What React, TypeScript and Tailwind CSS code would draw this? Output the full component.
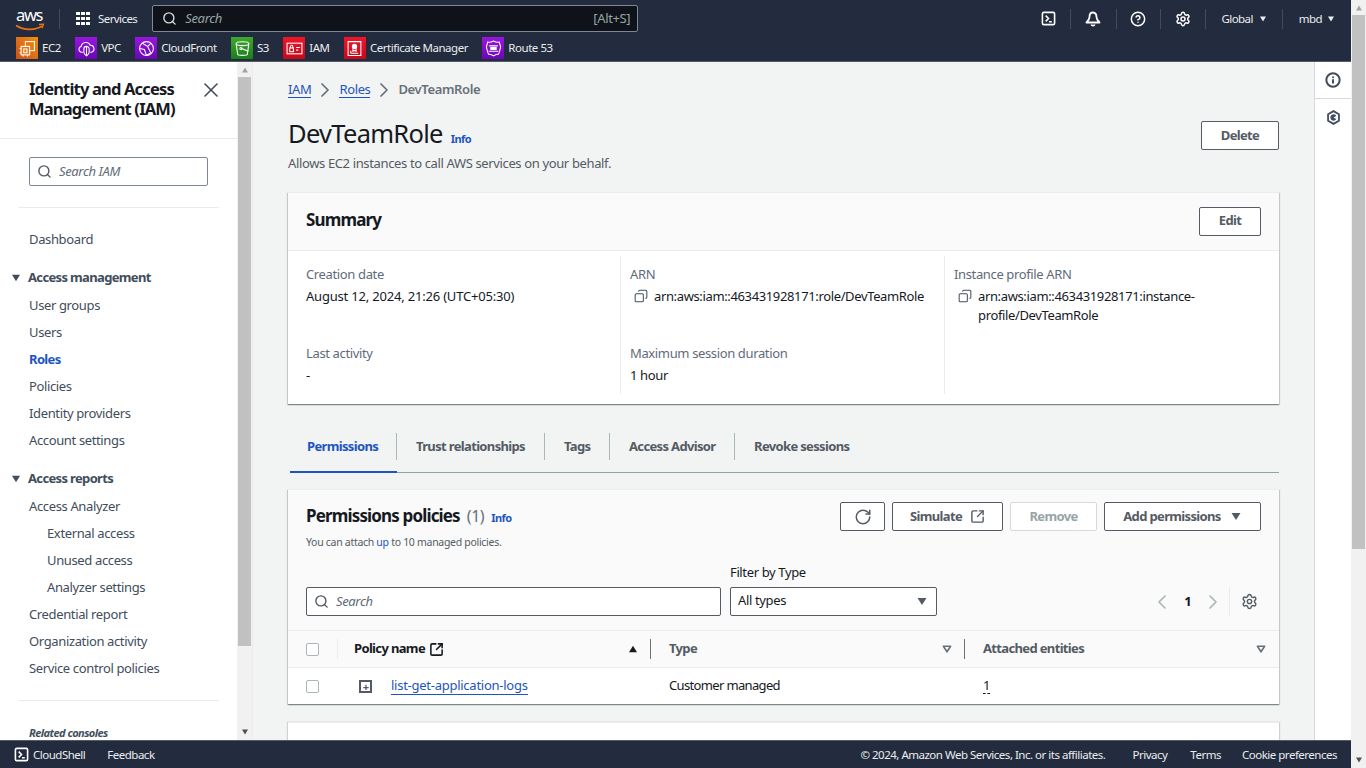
import React from 'react';
import { Search, X, RotateCw, SquareArrowOutUpRight, Settings, ChevronLeft, ChevronRight, Copy, HelpCircle, Info } from 'lucide-react';

const Caret: React.FC<{ className?: string; up?: boolean; outline?: boolean }> = ({ className, up, outline }) => (
  <svg viewBox="0 0 12 10" className={className}>
    {up ? (
      <path d="M6 1l5 8H1z" fill="currentColor" />
    ) : outline ? (
      <path d="M1.5 1.5h9L6 8.5z" fill="none" stroke="currentColor" strokeWidth="2" strokeLinejoin="round" />
    ) : (
      <path d="M1 1h10L6 9z" fill="currentColor" />
    )}
  </svg>
);

const TerminalIcon: React.FC<{ className?: string }> = ({ className }) => (
  <svg viewBox="0 0 16 16" className={className} fill="none" stroke="currentColor" strokeWidth="1.7">
    <rect x="1.5" y="1.5" width="13" height="13" rx="1.5" />
    <path d="M5 5l3 3-3 3M8.5 11.5h3" />
  </svg>
);

const BellIcon: React.FC<{ className?: string }> = ({ className }) => (
  <svg viewBox="0 0 16 16" className={className} fill="none" stroke="currentColor" strokeWidth="1.8" strokeLinejoin="round">
    <path d="M8 1.500c-2.500 0-3.500 2-3.500 4.500 0 2.500-1 3.500-3 5.500h13c-2-2-3-3-3-5.500 0-2.500-1-4.500-3.500-4.500z" />
    <path d="M6.300 13.500a1.800 1.800 0 0 0 3.400 0" />
  </svg>
);

const ServiceIcon: React.FC<{ bg: string; children: React.ReactNode }> = ({ bg, children }) => (
  <span className={`w-[22px] h-[22px] shrink-0 flex items-center justify-center ${bg}`}>
    <svg viewBox="0 0 16 16" className="w-[17px] h-[17px]" fill="none" stroke="white" strokeWidth="1">
      {children}
    </svg>
  </span>
);

const services = [
  {
    name: 'EC2',
    bg: 'bg-linear-to-tr from-[#c8511b] to-[#f78e04]',
    icon: (
      <>
        <rect x="6" y="1.500" width="8.500" height="8.500" />
        <rect x="2" y="6" width="8" height="8" fill="#e37a10" />
        <path d="M4.500 8.500h3v3.500h-3zM4 14v1.500M8 14v1.500M.5 8H2M.5 12H2" />
      </>
    ),
  },
  {
    name: 'VPC',
    bg: 'bg-linear-to-t from-[#6a06b4] to-[#9a16e0]',
    icon: (
      <>
        <path d="M4.500 11.500H3.500A2.800 2.800 0 0 1 3 6a4.500 4.500 0 0 1 8.500-1A3.300 3.300 0 0 1 12.500 11.500H11.500" />
        <path d="M5.500 8.500a2.500 2.500 0 0 1 5 0v3c0 1.800-1.500 2.800-2.500 3.500-1-.7-2.500-1.700-2.500-3.500zM8 6v9" />
      </>
    ),
  },
  {
    name: 'CloudFront',
    bg: 'bg-linear-to-t from-[#6a06b4] to-[#9a16e0]',
    icon: (
      <>
        <circle cx="8" cy="8" r="6.500" />
        <path d="M4 3l5 3 3 6-4 2.500-2-5.500-4.500-1M9 6l3.500-3" />
      </>
    ),
  },
  {
    name: 'S3',
    bg: 'bg-linear-to-t from-[#1b7e1b] to-[#3caa2c]',
    icon: (
      <>
        <ellipse cx="8" cy="3.500" rx="6" ry="1.800" />
        <path d="M2 3.500l1.500 10c.3 1.300 8.700 1.300 9 0L14 3.500" />
        <path d="M7 8l6.500 2.500" />
        <circle cx="6.500" cy="8" r="1" />
      </>
    ),
  },
  {
    name: 'IAM',
    bg: 'bg-linear-to-t from-[#c40a1c] to-[#f0152a]',
    icon: (
      <>
        <rect x="1" y="3" width="14" height="10" />
        <rect x="3.500" y="7.500" width="3.500" height="3.500" />
        <path d="M4.200 7.500V6a1 1 0 0 1 2.200 0v1.500M9.500 7h3.500M9.500 9.500h2" />
      </>
    ),
  },
  {
    name: 'Certificate Manager',
    bg: 'bg-linear-to-t from-[#c40a1c] to-[#f0152a]',
    icon: (
      <>
        <path d="M2 1.500h12v13H2z" />
        <path d="M4.500 12.500h7M4.500 10v2.500" />
        <circle cx="8" cy="6" r="2" fill="white" />
        <path d="M6.500 8v2.500l1.500-.7 1.500.7V8" />
      </>
    ),
  },
  {
    name: 'Route 53',
    bg: 'bg-linear-to-t from-[#6a06b4] to-[#9a16e0]',
    icon: (
      <>
        <path d="M8 1c2 1.200 3.500 1.500 5.500 1 .3 2.500 1.500 3.500 1 5.500-.6 2-1 5-2 6-1.800-.5-3.200.5-4.500 1.500-1.300-1-2.700-2-4.500-1.500-1-1-1.400-4-2-6-.5-2 .7-3 1-5.500 2 .5 3.500.2 5.500-1z" />
        <path d="M4 5.500h8M3.500 10.500h9" />
        <path d="M5.500 7h5v2h-5z" fill="white" />
      </>
    ),
  },
];

const NavLink: React.FC<{ label: string; active?: boolean; indent?: boolean }> = ({ label, active, indent }) => (
  <a className={`block h-[27px] leading-[27px] text-[13px] ${indent ? 'pl-[47px]' : 'pl-[29px]'} ${active ? 'font-bold text-[#1d55c0]' : 'text-[#414d5c]'}`}>
    {label}
  </a>
);

const NavHeading: React.FC<{ label: string }> = ({ label }) => (
  <div className="flex items-center h-[27px] mb-[1px] pl-[11px] gap-[7px] text-[13px] font-bold text-[#414d5c]">
    <Caret className="w-[10px] h-[8px]" />
    {label}
  </div>
);

const ScrollBar: React.FC<{ thumb: string }> = ({ thumb }) => (
  <div className="w-[15px] shrink-0 h-full bg-[#f1f1f1] flex flex-col items-center">
    <Caret up className="w-[8px] h-[6px] mt-[5px] mb-[4px] text-[#a3a3a3]" />
    <div className={`w-[13px] bg-[#c1c1c1] ${thumb}`} />
    <div className="flex-1" />
    <Caret className="w-[8px] h-[6px] mb-[5px] text-[#505050]" />
  </div>
);

const Sidebar: React.FC = () => (
  <aside className="w-[253px] shrink-0 flex bg-white border-r border-[#e9ebed] h-full overflow-hidden">
    <div className="w-[237px] shrink-0 overflow-hidden">
      <div className="h-[77px] border-b border-[#e9ebed] pl-[29px] pr-[14px] pt-[17px] flex justify-between">
        <h2 className="text-[16.500px] leading-[20px] font-bold text-[#16191f]">
          Identity and Access
          <br />
          Management (IAM)
        </h2>
        <X className="w-[24px] h-[24px] -mt-[1px] text-[#414d5c]" strokeWidth={1.6} />
      </div>
      <div className="px-[18px]">
        <div className="px-[11px] pt-[18px] pb-[21px] border-b border-[#e9ebed]">
          <div className="w-[179px] h-[29px] flex items-center gap-[7px] pl-[7px] border border-[#7d8998] rounded-[2px]">
            <Search className="w-[15px] h-[15px] text-[#545b64]" strokeWidth={2.25} />
            <span className="text-[13px] italic text-[#5f6b7a]">Search IAM</span>
          </div>
        </div>
      </div>
      <nav className="pt-[18px]">
        <NavLink label="Dashboard" />
        <div className="h-[11px]" />
        <NavHeading label="Access management" />
        <NavLink label="User groups" />
        <NavLink label="Users" />
        <NavLink label="Roles" active />
        <NavLink label="Policies" />
        <NavLink label="Identity providers" />
        <NavLink label="Account settings" />
        <div className="h-[11px]" />
        <NavHeading label="Access reports" />
        <NavLink label="Access Analyzer" />
        <NavLink label="External access" indent />
        <NavLink label="Unused access" indent />
        <NavLink label="Analyzer settings" indent />
        <NavLink label="Credential report" />
        <NavLink label="Organization activity" />
        <NavLink label="Service control policies" />
        <div className="mx-[18px] mt-[18px] border-t border-[#e9ebed]" />
        <div className="pl-[29px] pt-[24px] text-[11px] italic font-bold text-[#414d5c]">Related consoles</div>
      </nav>
    </div>
    <ScrollBar thumb="h-[569px]" />
  </aside>
);

const Label: React.FC<{ children: React.ReactNode }> = ({ children }) => (
  <div className="text-[13px] leading-[19px] text-[#5f6b7a]">{children}</div>
);

const Value: React.FC<{ className?: string; children: React.ReactNode }> = ({ className, children }) => (
  <div className={`mt-[3px] text-[13px] leading-[19px] text-[#16191f] ${className ?? ''}`}>{children}</div>
);

const CopyValue: React.FC<{ children: React.ReactNode }> = ({ children }) => (
  <div className="flex gap-[6px] mt-[3px] pl-[4px] text-[13px] leading-[19px] text-[#16191f]">
    <Copy className="w-[14px] h-[14px] mt-[2px] shrink-0 -scale-x-100 text-[#414d5c]" strokeWidth={1.75} />
    <div>{children}</div>
  </div>
);

const Button: React.FC<{ className?: string; children: React.ReactNode }> = ({ className, children }) => (
  <button className={`h-[29px] flex items-center justify-center gap-[7px] border border-[#545b64] rounded-[2px] bg-white text-[13px] font-bold text-[#545b64] ${className ?? ''}`}>
    {children}
  </button>
);

const Tab: React.FC<{ label: string; className: string; active?: boolean; last?: boolean }> = ({ label, className, active, last }) => (
  <div className={`relative h-[51px] flex items-center ${className}`}>
    <div className={`w-full text-[13px] font-bold ${active ? 'pl-[17px] text-[#1d55c0]' : 'pl-[19px] text-[#545b64]'} ${last ? '' : 'border-r border-[#aab7b8]'} h-[27px] leading-[27px]`}>
      {label}
    </div>
    {active && <div className="absolute left-0 right-0 -bottom-px h-[2px] bg-[#1d55c0]" />}
  </div>
);

const HeaderCell: React.FC<{ label: string }> = ({ label }) => (
  <div className="ml-[18px] w-[283px] flex items-center justify-between h-full">
    <span className="text-[13px] font-bold text-[#545b64]">{label}</span>
    <Caret outline className="w-[10px] h-[8px] text-[#687078]" />
  </div>
);

const Sep: React.FC<{ className: string }> = ({ className }) => <div className={`w-px h-[20px] bg-[#414d5c] ${className}`} />;

export default function App() {
  return (
    <div className="w-[1366px] h-[768px] overflow-hidden flex font-['Noto_Sans',sans-serif] [&_*]:tracking-[-0.028em] [&_.font-bold]:tracking-[-0.05em]">
      <div className="w-[1351px] shrink-0 h-full flex flex-col bg-[#f2f3f3]">
        <header className="h-[62px] shrink-0 bg-[#232b3e] text-white border-b border-[#545b64] flex flex-col">
          <div className="h-[37px] flex items-center">
            <svg viewBox="0 0 34 30" className="ml-[13px] w-[34px] h-[30px] shrink-0">
              <text x="3" y="17" fontSize="16.500" textLength="27" fill="white" fontFamily="'Noto Sans', sans-serif">aws</text>
              <path d="M3 21.500c8 5 19 5 26 .5" fill="none" stroke="#ec7211" strokeWidth="1.700" />
              <path d="M26 20.500l4.500-.3-1.500 4" fill="none" stroke="#ec7211" strokeWidth="1.300" />
            </svg>
            <Sep className="ml-[12px]" />
            <div className="ml-[16px] grid grid-cols-3 gap-[1.500px] w-[14px] h-[14px]">
              {Array.from({ length: 9 }).map((_, i) => (
                <span key={i} className="w-[3.500px] h-[3.500px] bg-white" />
              ))}
            </div>
            <span className="ml-[8px] text-[11.500px] !tracking-[-0.05em] text-[#eaeded]">Services</span>
            <div className="ml-[15px] w-[486px] h-[27px] bg-[#0f1319] border border-[#7d8998] rounded-[2px] flex items-center pl-[9px] pr-[7px]">
              <Search className="w-[15px] h-[15px] text-[#d5dbdb]" strokeWidth={2.25} />
              <span className="ml-[8px] text-[13px] italic text-[#95a5a6]">Search</span>
              <span className="ml-auto text-[13px] text-[#95a5a6]">[Alt+S]</span>
            </div>
            <div className="ml-auto flex items-center text-[#eaeded]">
              <TerminalIcon className="w-[15px] h-[15px] text-white" />
              <Sep className="mx-[14px]" />
              <BellIcon className="w-[16px] h-[16px] text-white" />
              <Sep className="ml-[15px] mr-[13px]" />
              <HelpCircle className="w-[16px] h-[16px] text-white" strokeWidth={2.25} />
              <Sep className="ml-[14px] mr-[14px]" />
              <Settings className="w-[16px] h-[16px] text-white" strokeWidth={2.25} />
              <Sep className="ml-[14px] mr-[15px]" />
              <span className="text-[11.500px] !tracking-[-0.05em]">Global</span>
              <Caret className="ml-[6px] w-[8px] h-[6px]" />
              <Sep className="ml-[15px] mr-[16px]" />
              <span className="text-[11.500px] !tracking-[-0.05em]">mbd</span>
              <Caret className="ml-[5px] mr-[16px] w-[8px] h-[6px]" />
            </div>
          </div>
          <div className="h-[24px] -mt-[1px] flex items-center pl-[16px] gap-[14.300px]">
            {services.map(s => (
              <div key={s.name} className="flex items-center gap-[4px]">
                <ServiceIcon bg={s.bg}>{s.icon}</ServiceIcon>
                <span className="text-[11.500px] !tracking-[-0.04em] text-[#eaeded] whitespace-nowrap">{s.name}</span>
              </div>
            ))}
          </div>
        </header>

        <div className="flex-1 min-h-0 flex">
          <Sidebar />

          <main className="flex-1 min-w-0 overflow-hidden px-[35px]">
            <div className="h-[55px] flex items-center text-[13px] gap-[2px]">
              <a className="text-[#1d55c0] border-b border-[#1d55c0] leading-[15px]">IAM</a>
              <ChevronRight className="w-[24px] h-[24px] text-[#687078]" strokeWidth={1.75} />
              <a className="text-[#1d55c0] border-b border-[#1d55c0] leading-[15px]">Roles</a>
              <ChevronRight className="w-[24px] h-[24px] text-[#687078]" strokeWidth={1.75} />
              <span className="font-semibold text-[#687078]">DevTeamRole</span>
            </div>

            <div className="flex justify-between items-start">
              <div>
                <div className="flex items-baseline gap-[8px] h-[36px] leading-[32px]">
                  <h1 className="text-[25.500px] text-[#16191f]">DevTeamRole</h1>
                  <span className="text-[11px] font-bold text-[#1d55c0]">Info</span>
                </div>
                <p className="text-[13px] leading-[20px] text-[#545b64]">Allows EC2 instances to call AWS services on your behalf.</p>
              </div>
              <Button className="w-[78px] mt-[4px]">Delete</Button>
            </div>

            <section className="mt-[19px] h-[212px] bg-white border-t border-[#eaeded] shadow-[0_1px_1px_0_rgba(0,28,36,0.3),1px_1px_1px_0_rgba(0,28,36,0.15),-1px_1px_1px_0_rgba(0,28,36,0.15)]">
              <div className="h-[58px] pb-[1px] flex items-center justify-between px-[18px] bg-[#fafafa] border-b border-[#eaeded]">
                <h2 className="-mt-[2px] text-[17px] font-bold text-[#16191f]">Summary</h2>
                <Button className="w-[62px]">Edit</Button>
              </div>
              <div className="grid grid-cols-[333px_324px_1fr] pt-[5px]">
                <div className="pl-[18px] pt-[9px] h-[138px] border-r border-[#eaeded]">
                  <Label>Creation date</Label>
                  <Value className="!tracking-[-0.015em]">August 12, 2024, 21:26 (UTC+05:30)</Value>
                  <div className="mt-[38px]"><Label>Last activity</Label></div>
                  <Value>-</Value>
                </div>
                <div className="pl-[9px] pt-[9px] h-[138px] border-r border-[#eaeded]">
                  <Label>ARN</Label>
                  <CopyValue>arn:aws:iam::463431928171:role/DevTeamRole</CopyValue>
                  <div className="mt-[38px]"><Label>Maximum session duration</Label></div>
                  <Value>1 hour</Value>
                </div>
                <div className="pl-[9px] pr-[60px] pt-[9px] h-[138px]">
                  <Label>Instance profile ARN</Label>
                  <CopyValue>arn:aws:iam::463431928171:instance-profile/DevTeamRole</CopyValue>
                </div>
              </div>
            </section>

            <div className="mt-[17px] ml-[2px] h-[52px] flex border-b border-[#8fa3a3]">
              <Tab label="Permissions" className="w-[107px]" active />
              <Tab label="Trust relationships" className="w-[148px]" />
              <Tab label="Tags" className="w-[65px]" />
              <Tab label="Access Advisor" className="w-[125px]" />
              <Tab label="Revoke sessions" className="w-[130px]" last />
            </div>

            <section className="mt-[16px] bg-white border-t border-[#eaeded] shadow-[0_1px_1px_0_rgba(0,28,36,0.3),1px_1px_1px_0_rgba(0,28,36,0.15),-1px_1px_1px_0_rgba(0,28,36,0.15)]">
              <div className="bg-[#fafafa] border-b border-[#eaeded] h-[141px] px-[18px] pt-[13px]">
                <div className="flex justify-between">
                  <div>
                    <div className="flex items-baseline gap-[7px] h-[26px]">
                      <h2 className="text-[17px] font-bold text-[#16191f]">Permissions policies</h2>
                      <span className="text-[16px] text-[#687078]">(1)</span>
                      <span className="text-[11px] font-bold text-[#1d55c0]">Info</span>
                    </div>
                    <p className="mt-[5px] text-[10.500px] leading-[16px] text-[#545b64]">
                      You can attach <span className="text-[#1d55c0]">up</span> to 10 managed policies.
                    </p>
                  </div>
                  <div className="flex gap-[7px] -mt-[1px] h-[29px]">
                    <Button className="w-[45px]"><RotateCw className="w-[18px] h-[18px]" strokeWidth={2} /></Button>
                    <Button className="w-[111px] gap-[8px]">Simulate <SquareArrowOutUpRight className="w-[15px] h-[15px]" strokeWidth={2.25} /></Button>
                    <Button className="w-[87px] !border-[#d5dbdb] !text-[#95a5a6]">Remove</Button>
                    <Button className="w-[157px] gap-[9px]">Add permissions <Caret className="w-[12px] h-[9px]" /></Button>
                  </div>
                </div>
                <div className="flex items-end justify-between mt-[13px]">
                  <div className="flex items-end gap-[9px]">
                    <div className="w-[415px] h-[29px] flex items-center gap-[7px] pl-[7px] bg-white border border-[#545b64] rounded-[2px]">
                      <Search className="w-[15px] h-[15px] text-[#545b64]" strokeWidth={2.25} />
                      <span className="text-[13px] italic text-[#5f6b7a]">Search</span>
                    </div>
                    <div>
                      <div className="text-[13px] leading-[19px] mb-[5px] text-[#16191f]">Filter by Type</div>
                      <div className="w-[207px] h-[29px] flex items-center justify-between pl-[7px] pr-[8px] pb-[1px] bg-white border border-[#545b64] rounded-[2px] text-[13px] text-[#16191f]">
                        All types
                        <Caret className="w-[12px] h-[9px] text-[#545b64]" />
                      </div>
                    </div>
                  </div>
                  <div className="flex items-center h-[29px] text-[#aab7b8]">
                    <ChevronLeft className="w-[24px] h-[24px]" strokeWidth={1.75} />
                    <span className="mx-[10px] text-[13px] font-bold text-[#16191f]">1</span>
                    <ChevronRight className="w-[24px] h-[24px]" strokeWidth={1.75} />
                    <div className="ml-[4px] mr-[11px] w-px h-[29px] bg-[#eaeded]" />
                    <Settings className="w-[17px] h-[17px] text-[#545b64]" strokeWidth={2} />
                    <div className="w-[3px]" />
                  </div>
                </div>
              </div>
              <div className="h-[37px] flex items-center bg-[#fafafa] border-b border-[#eaeded]">
                <span className="ml-[18px] w-[13px] h-[13px] bg-white border border-[#aab7b8] rounded-[2px]" />
                <div className="ml-[18px] w-px h-[20px] bg-[#eaeded]" />
                <div className="ml-[16px] w-[284px] flex items-center justify-between h-full">
                  <span className="flex items-center gap-[4px] text-[13px] font-bold text-[#16191f]">
                    Policy name <SquareArrowOutUpRight className="w-[15px] h-[15px]" strokeWidth={2.5} />
                  </span>
                  <Caret up className="w-[10px] h-[8px] text-[#16191f]" />
                </div>
                <div className="ml-[12px] w-px h-[20px] bg-[#687078]" />
                <HeaderCell label="Type" />
                <div className="ml-[12px] w-px h-[20px] bg-[#687078]" />
                <HeaderCell label="Attached entities" />
              </div>
              <div className="h-[36px] flex items-center">
                <span className="ml-[18px] w-[13px] h-[13px] bg-white border border-[#aab7b8] rounded-[2px]" />
                <span className="ml-[40px] w-[13px] h-[13px] border-2 border-[#545b64] flex items-center justify-center text-[11px] leading-none font-bold text-[#545b64]">+</span>
                <a className="ml-[19px] w-[278px] text-[13px] text-[#1d55c0]"><span className="!tracking-[-0.02em] border-b border-[#1d55c0]">list-get-application-logs</span></a>
                <span className="w-[314px] text-[13px] !tracking-[-0.05em] text-[#16191f]">Customer managed</span>
                <span className="text-[13px] text-[#16191f] border-b border-dashed border-[#16191f] leading-[15px]">1</span>
              </div>
            </section>

            <section className="mt-[18px] h-[40px] bg-white border-t border-[#eaeded] shadow-[1px_0_1px_0_rgba(0,28,36,0.15),-1px_0_1px_0_rgba(0,28,36,0.15)]" />
          </main>

          <aside className="w-[37px] shrink-0 bg-white border-l border-[#d5dbdb] flex flex-col items-center">
            <div className="h-[37px] w-full flex items-center justify-center border-b border-[#d5dbdb]">
              <Info className="w-[16px] h-[16px] text-[#414d5c]" strokeWidth={3} />
            </div>
            <div className="h-[37px] w-full flex items-center justify-center">
              <svg viewBox="0 0 16 16" className="w-[15px] h-[15px] text-[#414d5c]">
                <path d="M8 1.200l5.800 3.400v6.800L8 14.800l-5.800-3.400V4.600z" fill="none" stroke="currentColor" strokeWidth="1.900" />
                <path d="M11 6.300A3.400 3.400 0 1 0 11 9.700L8 8z" fill="currentColor" />
              </svg>
            </div>
          </aside>
        </div>

        <footer className="h-[28px] shrink-0 bg-[#232b3e] border-t border-[#545b64] flex items-center text-[11.500px] text-[#eaeded] [&>span]:!tracking-[-0.043em]">
          <TerminalIcon className="ml-[14px] w-[15px] h-[15px] text-white" />
          <span className="ml-[4px]">CloudShell</span>
          <span className="ml-[22px]">Feedback</span>
          <span className="ml-auto">© 2024, Amazon Web Services, Inc. or its affiliates.</span>
          <span className="ml-[27px]">Privacy</span>
          <span className="ml-[23px]">Terms</span>
          <span className="ml-[21px] mr-[14px]">Cookie preferences</span>
        </footer>
      </div>
      <ScrollBar thumb="h-[534px]" />
    </div>
  );
}
